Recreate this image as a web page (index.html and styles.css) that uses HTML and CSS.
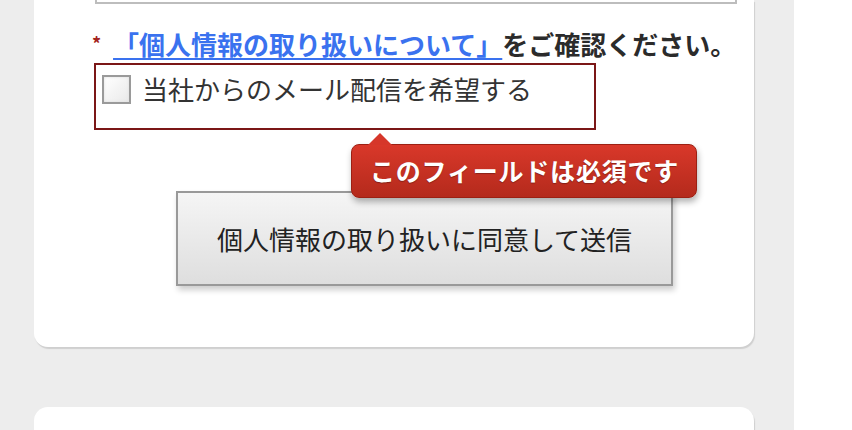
FILE: index.html
```html
<!DOCTYPE html>
<html lang="ja">
<head>
    <meta charset="utf-8">
    <title>お問い合わせ</title>
    <link rel="stylesheet" href="styles.css">
</head>
<body>
    <div class="page">
        <div class="card">
            <div class="text-input"></div>

            <p class="notice">
                <span class="required">*</span>
                <a href="#" class="privacy-link">「個人情報の取り扱いについて」</a>をご確認ください。
            </p>

            <div class="optin">
                <label class="optin-label">
                    <span class="checkbox"></span>
                    当社からのメール配信を希望する
                </label>
            </div>

            <div class="submit-row">
                <button type="submit" class="submit-btn">個人情報の取り扱いに同意して送信</button>
                <div class="tooltip">このフィールドは必須です</div>
            </div>
        </div>

        <div class="card card-next"></div>
    </div>
</body>
</html>
```

FILE: styles.css
```css
body {
    margin: 0;
    background-color: #fff;
    font-family: "Noto Sans CJK JP", "Noto Sans", sans-serif;
    color: #333;
    overflow: hidden;
}

.page {
    width: 794px;
    height: 430px;
    overflow: hidden;
    background-color: #ededed;
    padding-left: 34px;
    box-sizing: border-box;
}

.card {
    width: 720px;
    background-color: #fff;
    border-radius: 0 0 14px 14px;
    box-shadow: 1px 2px 1px #cfcfcf;
    padding-bottom: 61px;
}

.card-next {
    margin-top: 60px;
    height: 24px;
    padding: 0;
    border-radius: 14px 14px 0 0;
}

.text-input {
    margin-left: 61px;
    width: 638px;
    height: 2px;
    border: 2px solid #bdbdbd;
    border-top: none;
    background-color: #fff;
}

.notice {
    margin: 23px 0 0 58px;
    font-size: 26px;
    font-weight: bold;
    line-height: 32px;
    color: #2b2b2b;
}

.required {
    color: #a3241c;
    font-size: 18px;
    vertical-align: 4px;
    margin-right: 6px;
}

.privacy-link {
    color: #3a72ef;
    text-decoration: underline;
    text-decoration-thickness: 2px;
    text-underline-offset: 3px;
}

.optin {
    margin: 3px 0 0 60px;
    width: 492px;
    height: 54px;
    border: 2px solid #7b1717;
    padding: 9px 0 0 6px;
}

.optin-label {
    display: flex;
    align-items: center;
    gap: 11px;
    font-size: 26px;
    line-height: 30px;
    color: #333;
}

.checkbox {
    width: 25px;
    height: 25px;
    border: 2px solid #9a9a9a;
    background: linear-gradient(135deg, #ffffff, #e9e9e9);
    box-shadow: inset 0 0 3px #ddd;
}

.submit-row {
    position: relative;
    margin: 61px 0 0 142px;
    width: 497px;
}

.submit-btn {
    display: block;
    width: 497px;
    height: 95px;
    border: 2px solid #999;
    background: linear-gradient(#f5f5f5, #dedede);
    font-family: inherit;
    font-size: 26px;
    color: #222;
    box-shadow: 2px 4px 6px rgba(0, 0, 0, 0.2);
    cursor: pointer;
}

.tooltip {
    position: absolute;
    left: 175px;
    top: -47px;
    width: 346px;
    height: 54px;
    box-sizing: border-box;
    padding-left: 18px;
    border-radius: 8px;
    background: linear-gradient(#d9382a, #b42a1c);
    border: 1px solid #9c2013;
    color: #fff;
    font-size: 25px;
    font-weight: bold;
    line-height: 50px;
    letter-spacing: 0.8px;
    box-shadow: 1px 4px 6px rgba(0, 0, 0, 0.3);
    text-shadow: 0 1px 1px rgba(0, 0, 0, 0.3);
}

.tooltip::before {
    content: "";
    position: absolute;
    left: 16px;
    top: -12px;
    border-left: 12px solid transparent;
    border-right: 12px solid transparent;
    border-bottom: 12px solid #d6372a;
}
```
